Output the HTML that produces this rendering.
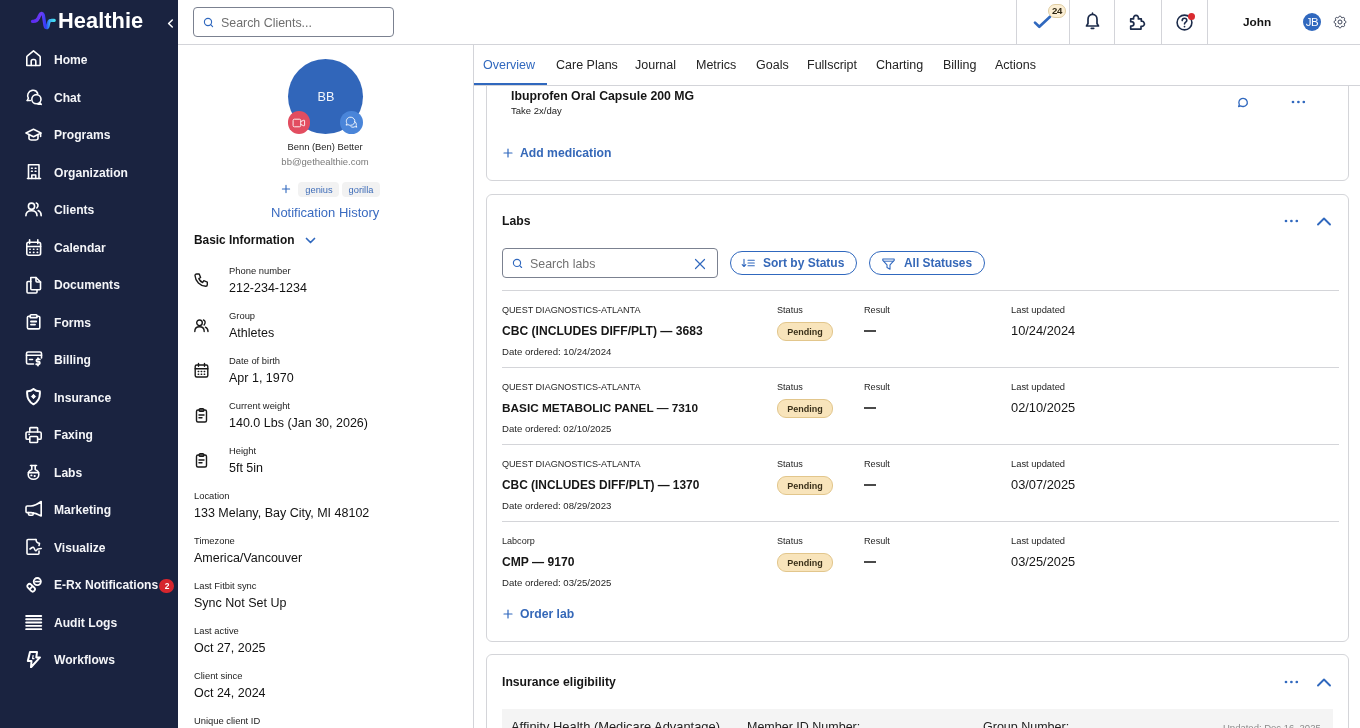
<!DOCTYPE html>
<html><head><meta charset="utf-8"><title>Healthie</title>
<style>
html,body{margin:0;padding:0;}
body{width:1360px;height:728px;overflow:hidden;position:relative;background:#fff;font-family:"Liberation Sans",sans-serif;}
.t{position:absolute;white-space:nowrap;line-height:1;will-change:transform;}
svg{display:block;}
</style></head><body><div style="position:relative;width:1360px;height:728px;overflow:hidden;">
<div style="position:absolute;left:486px;top:20px;width:863px;height:161px;box-sizing:border-box;border:1px solid #d4d5d9;border-radius:6px;background:#fff;"></div>
<div style="position:absolute;left:486px;top:193.5px;width:863px;height:448px;box-sizing:border-box;border:1px solid #d4d5d9;border-radius:6px;background:#fff;"></div>
<div style="position:absolute;left:486px;top:654px;width:863px;height:200px;box-sizing:border-box;border:1px solid #d4d5d9;border-radius:6px;background:#fff;"></div>
<div style="position:absolute;left:474px;top:45px;width:886px;height:40px;background:#fff;"></div>
<div style="position:absolute;left:474px;top:85px;width:886px;height:1px;background:#d3d4d9;"></div>
<div style="position:absolute;left:474px;top:83px;width:73px;height:2.2px;background:#3068be;"></div>
<div class="t" style="left:483.3px;top:59px;font-size:12.5px;color:#3068be;">Overview</div>
<div class="t" style="left:556.3px;top:59px;font-size:12.5px;color:#232323;">Care Plans</div>
<div class="t" style="left:635.2px;top:59px;font-size:12.5px;color:#232323;">Journal</div>
<div class="t" style="left:695.8px;top:59px;font-size:12.5px;color:#232323;">Metrics</div>
<div class="t" style="left:756px;top:59px;font-size:12.5px;color:#232323;">Goals</div>
<div class="t" style="left:806.6px;top:59px;font-size:12.5px;color:#232323;">Fullscript</div>
<div class="t" style="left:876.4px;top:59px;font-size:12.5px;color:#232323;">Charting</div>
<div class="t" style="left:943px;top:59px;font-size:12.5px;color:#232323;">Billing</div>
<div class="t" style="left:995px;top:59px;font-size:12.5px;color:#232323;">Actions</div>
<div class="t" style="left:510.9px;top:90px;font-size:12.3px;font-weight:700;color:#161616;">Ibuprofen Oral Capsule 200 MG</div>
<div class="t" style="left:510.9px;top:106px;font-size:9.5px;color:#222;">Take 2x/day</div>
<svg style="position:absolute;left:1236px;top:96px;" width="14" height="12" viewBox="0 0 14 12" fill="none"><path d="M2.6 10.6 L3.3 8.4 C2.2 6.3 3.2 3.6 5.6 2.7 C8 1.9 10.6 3.2 11.2 5.6 C11.8 8 10 10.3 7.5 10.5 C6.3 10.6 5.3 10.3 4.6 9.9 Z" stroke="#3068be" stroke-width="1.3" stroke-linejoin="round"/></svg>
<svg style="position:absolute;left:1289.5px;top:99.1px;" width="17" height="6" viewBox="0 0 17 6" fill="none"><circle cx="3.00" cy="3" r="1.35" fill="#3068be"/><circle cx="8.40" cy="3" r="1.35" fill="#3068be"/><circle cx="13.80" cy="3" r="1.35" fill="#3068be"/></svg>
<svg style="position:absolute;left:502px;top:147px;" width="12" height="12" viewBox="0 0 12 12" fill="none"><path d="M6 2 V10 M2 6 H10" stroke="#3068be" stroke-width="1.2" stroke-linecap="round"/></svg>
<div class="t" style="left:520.2px;top:147px;font-size:12.2px;font-weight:700;color:#3568b8;">Add medication</div>
<div class="t" style="left:502px;top:215px;font-size:12.2px;font-weight:700;color:#161616;">Labs</div>
<svg style="position:absolute;left:1282.6px;top:218px;" width="17" height="6" viewBox="0 0 17 6" fill="none"><circle cx="3.00" cy="3" r="1.35" fill="#3068be"/><circle cx="8.40" cy="3" r="1.35" fill="#3068be"/><circle cx="13.80" cy="3" r="1.35" fill="#3068be"/></svg>
<svg style="position:absolute;left:1316px;top:214.8px;" width="16" height="12" viewBox="0 0 16 12" fill="none"><path d="M2 9.5 L8 3.5 L14 9.5" stroke="#3068be" stroke-width="1.9" stroke-linecap="round" stroke-linejoin="round"/></svg>
<div style="position:absolute;left:502px;top:248px;width:216px;height:30px;box-sizing:border-box;border:1px solid #7b8190;border-radius:4px;"></div>
<svg style="position:absolute;left:512px;top:258px;" width="11" height="11" viewBox="0 0 11 11" fill="none"><circle cx="5" cy="4.9" r="3.6" stroke="#3068be" stroke-width="1.15"/><path d="M7.7 7.6 L9.6 9.5" stroke="#3068be" stroke-width="1.15" stroke-linecap="round"/></svg>
<div class="t" style="left:530.2px;top:258px;font-size:12.4px;color:#727272;">Search labs</div>
<svg style="position:absolute;left:694px;top:258px;" width="12" height="12" viewBox="0 0 12 12" fill="none"><path d="M1.5 1.5 L10.5 10.5 M10.5 1.5 L1.5 10.5" stroke="#3068be" stroke-width="1.2" stroke-linecap="round"/></svg>
<div style="position:absolute;left:730px;top:251.3px;width:127px;height:24.2px;box-sizing:border-box;border:1.2px solid #3068be;border-radius:13px;"></div>
<svg style="position:absolute;left:741px;top:257px;" width="15" height="12" viewBox="0 0 15 12" fill="none"><path d="M3 2.2 V9.5 M1.2 7.6 L3 9.5 L4.8 7.6" stroke="#3068be" stroke-width="1.1" stroke-linecap="round" stroke-linejoin="round"/><path d="M7 3.2 H13.3 M7 6 H13.3 M7 8.8 H13.3" stroke="#3068be" stroke-width="1.1" stroke-linecap="round"/></svg>
<div class="t" style="left:763.2px;top:257px;font-size:12px;font-weight:700;color:#3568b8;">Sort by Status</div>
<div style="position:absolute;left:869px;top:251.3px;width:116px;height:24.2px;box-sizing:border-box;border:1.2px solid #3068be;border-radius:13px;"></div>
<svg style="position:absolute;left:881px;top:256.5px;" width="15" height="14" viewBox="0 0 15 14" fill="none"><path d="M1.8 2 H13.2 L13.2 3.4 L9 7.8 V12.2 L6 10.6 V7.8 L1.8 3.4 Z" stroke="#3068be" stroke-width="1.1" stroke-linejoin="round"/><path d="M2.6 4.2 H12.4" stroke="#3068be" stroke-width="1"/></svg>
<div class="t" style="left:904.3px;top:258px;font-size:11.9px;font-weight:700;color:#3568b8;">All Statuses</div>
<div style="position:absolute;left:502px;top:290px;width:837px;height:1px;background:#d4d5d9;"></div>
<div class="t" style="left:502px;top:306px;font-size:9.07px;color:#1f1f1f;">QUEST DIAGNOSTICS-ATLANTA</div>
<div class="t" style="left:502px;top:325px;font-size:12.1px;font-weight:700;color:#161616;">CBC (INCLUDES DIFF/PLT) — 3683</div>
<div class="t" style="left:502px;top:347px;font-size:9.6px;color:#1f1f1f;">Date ordered: 10/24/2024</div>
<div class="t" style="left:777.2px;top:306px;font-size:9.14px;color:#1f1f1f;">Status</div>
<div style="position:absolute;left:777.2px;top:322px;width:55.6px;height:19px;box-sizing:border-box;background:#f8e4bb;border:1px solid #e2c68c;border-radius:9px;"></div>
<div class="t" style="left:805px;top:328px;font-size:9.0px;font-weight:700;color:#3a3019;transform:translateX(-50%);">Pending</div>
<div class="t" style="left:863.8px;top:306px;font-size:9.14px;color:#1f1f1f;">Result</div>
<div style="position:absolute;left:864px;top:330.2px;width:11.6px;height:1.8px;background:#4a4a4a;"></div>
<div class="t" style="left:1010.9px;top:306px;font-size:9.36px;color:#1f1f1f;">Last updated</div>
<div class="t" style="left:1010.7px;top:325px;font-size:12.83px;color:#161616;">10/24/2024</div>
<div style="position:absolute;left:502px;top:367px;width:837px;height:1px;background:#d4d5d9;"></div>
<div class="t" style="left:502px;top:383px;font-size:9.07px;color:#1f1f1f;">QUEST DIAGNOSTICS-ATLANTA</div>
<div class="t" style="left:502px;top:403px;font-size:11.8px;font-weight:700;color:#161616;">BASIC METABOLIC PANEL — 7310</div>
<div class="t" style="left:502px;top:424px;font-size:9.6px;color:#1f1f1f;">Date ordered: 02/10/2025</div>
<div class="t" style="left:777.2px;top:383px;font-size:9.14px;color:#1f1f1f;">Status</div>
<div style="position:absolute;left:777.2px;top:399px;width:55.6px;height:19px;box-sizing:border-box;background:#f8e4bb;border:1px solid #e2c68c;border-radius:9px;"></div>
<div class="t" style="left:805px;top:405px;font-size:9.0px;font-weight:700;color:#3a3019;transform:translateX(-50%);">Pending</div>
<div class="t" style="left:863.8px;top:383px;font-size:9.14px;color:#1f1f1f;">Result</div>
<div style="position:absolute;left:864px;top:407.2px;width:11.6px;height:1.8px;background:#4a4a4a;"></div>
<div class="t" style="left:1010.9px;top:383px;font-size:9.36px;color:#1f1f1f;">Last updated</div>
<div class="t" style="left:1010.7px;top:402px;font-size:12.83px;color:#161616;">02/10/2025</div>
<div style="position:absolute;left:502px;top:444px;width:837px;height:1px;background:#d4d5d9;"></div>
<div class="t" style="left:502px;top:460px;font-size:9.07px;color:#1f1f1f;">QUEST DIAGNOSTICS-ATLANTA</div>
<div class="t" style="left:502px;top:480px;font-size:11.9px;font-weight:700;color:#161616;">CBC (INCLUDES DIFF/PLT) — 1370</div>
<div class="t" style="left:502px;top:501px;font-size:9.6px;color:#1f1f1f;">Date ordered: 08/29/2023</div>
<div class="t" style="left:777.2px;top:460px;font-size:9.14px;color:#1f1f1f;">Status</div>
<div style="position:absolute;left:777.2px;top:476px;width:55.6px;height:19px;box-sizing:border-box;background:#f8e4bb;border:1px solid #e2c68c;border-radius:9px;"></div>
<div class="t" style="left:805px;top:482px;font-size:9.0px;font-weight:700;color:#3a3019;transform:translateX(-50%);">Pending</div>
<div class="t" style="left:863.8px;top:460px;font-size:9.14px;color:#1f1f1f;">Result</div>
<div style="position:absolute;left:864px;top:484.2px;width:11.6px;height:1.8px;background:#4a4a4a;"></div>
<div class="t" style="left:1010.9px;top:460px;font-size:9.36px;color:#1f1f1f;">Last updated</div>
<div class="t" style="left:1010.7px;top:479px;font-size:12.83px;color:#161616;">03/07/2025</div>
<div style="position:absolute;left:502px;top:521px;width:837px;height:1px;background:#d4d5d9;"></div>
<div class="t" style="left:502px;top:537px;font-size:9.07px;color:#1f1f1f;">Labcorp</div>
<div class="t" style="left:502px;top:556px;font-size:12.1px;font-weight:700;color:#161616;">CMP — 9170</div>
<div class="t" style="left:502px;top:578px;font-size:9.6px;color:#1f1f1f;">Date ordered: 03/25/2025</div>
<div class="t" style="left:777.2px;top:537px;font-size:9.14px;color:#1f1f1f;">Status</div>
<div style="position:absolute;left:777.2px;top:553px;width:55.6px;height:19px;box-sizing:border-box;background:#f8e4bb;border:1px solid #e2c68c;border-radius:9px;"></div>
<div class="t" style="left:805px;top:559px;font-size:9.0px;font-weight:700;color:#3a3019;transform:translateX(-50%);">Pending</div>
<div class="t" style="left:863.8px;top:537px;font-size:9.14px;color:#1f1f1f;">Result</div>
<div style="position:absolute;left:864px;top:561.2px;width:11.6px;height:1.8px;background:#4a4a4a;"></div>
<div class="t" style="left:1010.9px;top:537px;font-size:9.36px;color:#1f1f1f;">Last updated</div>
<div class="t" style="left:1010.7px;top:556px;font-size:12.83px;color:#161616;">03/25/2025</div>
<svg style="position:absolute;left:502px;top:608px;" width="12" height="12" viewBox="0 0 12 12" fill="none"><path d="M6 2 V10 M2 6 H10" stroke="#3068be" stroke-width="1.2" stroke-linecap="round"/></svg>
<div class="t" style="left:519.9px;top:608px;font-size:12.2px;font-weight:700;color:#3568b8;">Order lab</div>
<div class="t" style="left:502px;top:676px;font-size:12.2px;font-weight:700;color:#161616;">Insurance eligibility</div>
<svg style="position:absolute;left:1282.6px;top:679px;" width="17" height="6" viewBox="0 0 17 6" fill="none"><circle cx="3.00" cy="3" r="1.35" fill="#3068be"/><circle cx="8.40" cy="3" r="1.35" fill="#3068be"/><circle cx="13.80" cy="3" r="1.35" fill="#3068be"/></svg>
<svg style="position:absolute;left:1316px;top:675.8px;" width="16" height="12" viewBox="0 0 16 12" fill="none"><path d="M2 9.5 L8 3.5 L14 9.5" stroke="#3068be" stroke-width="1.9" stroke-linecap="round" stroke-linejoin="round"/></svg>
<div style="position:absolute;left:502px;top:709px;width:831px;height:40px;background:#f4f4f4;"></div>
<div class="t" style="left:511.4px;top:721px;font-size:12.9px;color:#222;">Affinity Health (Medicare Advantage)</div>
<div class="t" style="left:747px;top:721px;font-size:12.5px;color:#222;">Member ID Number:</div>
<div class="t" style="left:983px;top:721px;font-size:12.5px;color:#222;">Group Number:</div>
<div class="t" style="left:1223px;top:723px;font-size:9.5px;color:#8a8a8a;">Updated: Dec 16, 2025</div>
<div style="position:absolute;left:473px;top:45px;width:1px;height:683px;background:#d3d4d9;"></div>
<div style="position:absolute;left:288px;top:58.8px;width:75px;height:75px;background:#3166ba;border-radius:50%;"></div>
<div class="t" style="left:325.5px;top:91px;font-size:12.6px;color:#f2f5fb;transform:translateX(-50%);">BB</div>
<div style="position:absolute;left:287.6px;top:110.9px;width:22.6px;height:22.8px;background:#e24d60;border-radius:50%;"></div>
<svg style="position:absolute;left:290px;top:113px;" width="18" height="18" viewBox="0 0 18 18" fill="none"><rect x="3.1" y="6.2" width="7.6" height="7.6" rx="1.3" stroke="#fff" stroke-width="0.9"/><path d="M10.7 8.6 L13.8 7.2 C14.2 7 14.6 7.3 14.6 7.7 V12.3 C14.6 12.7 14.2 13 13.8 12.8 L10.7 11.4" stroke="#fff" stroke-width="0.9" stroke-linejoin="round"/></svg>
<div style="position:absolute;left:340.1px;top:110.9px;width:22.7px;height:22.8px;background:#4a85d9;border-radius:50%;"></div>
<svg style="position:absolute;left:342px;top:113px;" width="18" height="18" viewBox="0 0 18 18" fill="none"><path d="M4 12.1 L4.9 10.4 C3.6 8.2 4.6 5 7.4 4.3 C9.8 3.7 12.4 5.2 12.8 7.6 C13.2 10.1 11.2 12.3 8.6 12.3 C7.7 12.3 6.8 12.1 6.1 11.7 Z" stroke="#fff" stroke-width="0.9" stroke-linejoin="round"/><path d="M12.6 8.4 C14 9.2 14.7 10.9 14.2 12.5 L14.8 14.2 L13 13.6 C11.9 14.4 10.2 14.5 8.9 13.7" stroke="#fff" stroke-width="0.9" stroke-linejoin="round" stroke-linecap="round"/></svg>
<div class="t" style="left:325.2px;top:142px;font-size:9.4px;color:#1d1d1d;transform:translateX(-50%);">Benn (Ben) Better</div>
<div class="t" style="left:325.2px;top:157px;font-size:9.5px;color:#7a7a7a;transform:translateX(-50%);">bb@gethealthie.com</div>
<svg style="position:absolute;left:281px;top:184px;" width="10" height="10" viewBox="0 0 10 10" fill="none"><path d="M5 1.4 V8.6 M1.4 5 H8.6" stroke="#3068be" stroke-width="1.1" stroke-linecap="round"/></svg>
<div style="position:absolute;left:298px;top:182px;width:41px;height:15px;background:#f2f2f2;border-radius:4px;"></div>
<div class="t" style="left:318.5px;top:186px;font-size:9.3px;color:#3d6cb8;transform:translateX(-50%);">genius</div>
<div style="position:absolute;left:342px;top:182px;width:38.2px;height:15px;background:#f2f2f2;border-radius:4px;"></div>
<div class="t" style="left:361.1px;top:186px;font-size:9.3px;color:#3d6cb8;transform:translateX(-50%);">gorilla</div>
<div class="t" style="left:271.4px;top:206px;font-size:13px;color:#3a6bc0;">Notification History</div>
<div class="t" style="left:193.75px;top:235px;font-size:11.9px;font-weight:700;color:#141414;">Basic Information</div>
<svg style="position:absolute;left:305px;top:236px;" width="11" height="9" viewBox="0 0 11 9" fill="none"><path d="M1.5 2.5 L5.5 6.5 L9.5 2.5" stroke="#3068be" stroke-width="1.7" stroke-linecap="round" stroke-linejoin="round"/></svg>
<div class="t" style="left:229.4px;top:266px;font-size:9.4px;color:#1c1c1c;">Phone number</div>
<div class="t" style="left:229.4px;top:282px;font-size:12.5px;color:#121212;">212-234-1234</div>
<svg style="position:absolute;left:193px;top:272px;" width="17" height="17" viewBox="0 0 17 17" fill="none"><path d="M3.5 2 H6.2 L7.6 5.5 L5.8 6.6 C6.6 8.4 7.9 9.7 9.7 10.5 L10.8 8.7 L14.3 10.1 V12.8 C14.3 13.6 13.6 14.3 12.8 14.3 C7 13.9 2.4 9.3 2 3.5 C2 2.7 2.7 2 3.5 2 Z" stroke="#1a1a1a" stroke-width="1.4" stroke-linecap="round" stroke-linejoin="round"/></svg>
<div class="t" style="left:229.4px;top:311px;font-size:9.4px;color:#1c1c1c;">Group</div>
<div class="t" style="left:229.4px;top:327px;font-size:12.5px;color:#121212;">Athletes</div>
<svg style="position:absolute;left:193px;top:317px;" width="17" height="17" viewBox="0 0 17 17" fill="none"><circle cx="6.5" cy="5.8" r="2.8" stroke="#1a1a1a" stroke-width="1.4" stroke-linecap="round" stroke-linejoin="round"/><path d="M1.8 14.5 C1.8 11.3 3.8 9.8 6.5 9.8 C9.2 9.8 11.2 11.3 11.2 14.5" stroke="#1a1a1a" stroke-width="1.4" stroke-linecap="round" stroke-linejoin="round"/><path d="M10.5 3 C12.3 3.6 12.8 6 11.1 8" stroke="#1a1a1a" stroke-width="1.4" stroke-linecap="round" stroke-linejoin="round"/><path d="M12.4 10.2 C14.2 11 15 12.3 15 14.5" stroke="#1a1a1a" stroke-width="1.4" stroke-linecap="round" stroke-linejoin="round"/></svg>
<div class="t" style="left:229.4px;top:356px;font-size:9.4px;color:#1c1c1c;">Date of birth</div>
<div class="t" style="left:229.4px;top:372px;font-size:12.5px;color:#121212;">Apr 1, 1970</div>
<svg style="position:absolute;left:193px;top:362px;" width="17" height="17" viewBox="0 0 17 17" fill="none"><rect x="2.2" y="3" width="12.6" height="12" rx="1.5" stroke="#1a1a1a" stroke-width="1.4" stroke-linecap="round" stroke-linejoin="round"/><path d="M2.2 6.8 H14.8 M5.5 1.5 V4.2 M11.5 1.5 V4.2" stroke="#1a1a1a" stroke-width="1.4" stroke-linecap="round" stroke-linejoin="round"/><path d="M5.2 9.5h.5M8.2 9.5h.5M11.2 9.5h.5M5.2 12.2h.5M8.2 12.2h.5M11.2 12.2h.5" stroke="#1a1a1a" stroke-width="1.4" stroke-linecap="round" stroke-linejoin="round"/></svg>
<div class="t" style="left:229.4px;top:401px;font-size:9.4px;color:#1c1c1c;">Current weight</div>
<div class="t" style="left:229.4px;top:417px;font-size:12.5px;color:#121212;">140.0 Lbs (Jan 30, 2026)</div>
<svg style="position:absolute;left:193px;top:407px;" width="17" height="17" viewBox="0 0 17 17" fill="none"><rect x="3.5" y="3" width="10" height="12" rx="1.5" stroke="#1a1a1a" stroke-width="1.4" stroke-linecap="round" stroke-linejoin="round"/><rect x="6.2" y="1.6" width="4.6" height="2.8" rx="1" stroke="#1a1a1a" stroke-width="1.4" stroke-linecap="round" stroke-linejoin="round"/><path d="M6 8 H11 M6 10.8 H9" stroke="#1a1a1a" stroke-width="1.4" stroke-linecap="round" stroke-linejoin="round"/></svg>
<div class="t" style="left:229.4px;top:446px;font-size:9.4px;color:#1c1c1c;">Height</div>
<div class="t" style="left:229.4px;top:462px;font-size:12.5px;color:#121212;">5ft 5in</div>
<svg style="position:absolute;left:193px;top:452px;" width="17" height="17" viewBox="0 0 17 17" fill="none"><rect x="3.5" y="3" width="10" height="12" rx="1.5" stroke="#1a1a1a" stroke-width="1.4" stroke-linecap="round" stroke-linejoin="round"/><rect x="6.2" y="1.6" width="4.6" height="2.8" rx="1" stroke="#1a1a1a" stroke-width="1.4" stroke-linecap="round" stroke-linejoin="round"/><path d="M6 8 H11 M6 10.8 H9" stroke="#1a1a1a" stroke-width="1.4" stroke-linecap="round" stroke-linejoin="round"/></svg>
<div class="t" style="left:193.5px;top:491px;font-size:9.4px;color:#1c1c1c;">Location</div>
<div class="t" style="left:193.5px;top:507px;font-size:12.5px;color:#121212;">133 Melany, Bay City, MI 48102</div>
<div class="t" style="left:193.5px;top:536px;font-size:9.4px;color:#1c1c1c;">Timezone</div>
<div class="t" style="left:193.5px;top:552px;font-size:12.5px;color:#121212;">America/Vancouver</div>
<div class="t" style="left:193.5px;top:581px;font-size:9.4px;color:#1c1c1c;">Last Fitbit sync</div>
<div class="t" style="left:193.5px;top:597px;font-size:12.5px;color:#121212;">Sync Not Set Up</div>
<div class="t" style="left:193.5px;top:626px;font-size:9.4px;color:#1c1c1c;">Last active</div>
<div class="t" style="left:193.5px;top:642px;font-size:12.5px;color:#121212;">Oct 27, 2025</div>
<div class="t" style="left:193.5px;top:671px;font-size:9.4px;color:#1c1c1c;">Client since</div>
<div class="t" style="left:193.5px;top:687px;font-size:12.5px;color:#121212;">Oct 24, 2024</div>
<div class="t" style="left:193.5px;top:716px;font-size:9.4px;color:#1c1c1c;">Unique client ID</div>
<div style="position:absolute;left:178px;top:0px;width:1182px;height:44px;background:#fff;"></div>
<div style="position:absolute;left:178px;top:44px;width:1182px;height:1px;background:#d3d4d9;"></div>
<div style="position:absolute;left:193px;top:7px;width:201px;height:30px;box-sizing:border-box;border:1px solid #7b8190;border-radius:4px;background:#fff;"></div>
<svg style="position:absolute;left:203px;top:17px;" width="11" height="11" viewBox="0 0 11 11" fill="none"><circle cx="5" cy="5" r="3.6" stroke="#3068be" stroke-width="1.15"/><path d="M7.7 7.7 L9.6 9.6" stroke="#3068be" stroke-width="1.15" stroke-linecap="round"/></svg>
<div class="t" style="left:221.4px;top:17px;font-size:12.4px;color:#6f6f6f;">Search Clients...</div>
<div style="position:absolute;left:1016px;top:0px;width:1px;height:44px;background:#d3d4d9;"></div>
<div style="position:absolute;left:1069px;top:0px;width:1px;height:44px;background:#d3d4d9;"></div>
<div style="position:absolute;left:1114px;top:0px;width:1px;height:44px;background:#d3d4d9;"></div>
<div style="position:absolute;left:1161px;top:0px;width:1px;height:44px;background:#d3d4d9;"></div>
<div style="position:absolute;left:1207px;top:0px;width:1px;height:44px;background:#d3d4d9;"></div>
<svg style="position:absolute;left:1033px;top:14px;" width="20" height="16" viewBox="0 0 20 16" fill="none"><path d="M2 8.6 L6.3 12.8 L17 2.8" stroke="#3068be" stroke-width="2.7" stroke-linecap="round" stroke-linejoin="round"/></svg>
<div style="position:absolute;left:1048px;top:4px;width:18px;height:14px;box-sizing:border-box;background:#fcefd4;border:1px solid #dfcda3;border-radius:7px;"></div>
<div class="t" style="left:1057px;top:6px;font-size:9.6px;font-weight:700;color:#2e2612;letter-spacing:-0.3px;transform:translateX(-50%);">24</div>
<svg style="position:absolute;left:1084px;top:12px;" width="17" height="18" viewBox="0 0 17 18" fill="none"><path d="M8.5 2.3 C11.2 2.3 13 4.5 13 7.3 V11.5 L14.5 14 H2.5 L4 11.5 V7.3 C4 4.5 5.8 2.3 8.5 2.3 Z" stroke="#1c2b4a" stroke-width="1.7" stroke-linejoin="round"/><path d="M7.3 16.3 H9.7" stroke="#1c2b4a" stroke-width="1.7" stroke-linecap="round"/><path d="M8.5 1 V2.3" stroke="#1c2b4a" stroke-width="1.5" stroke-linecap="round"/></svg>
<svg style="position:absolute;left:1128px;top:13px;" width="19" height="19" viewBox="0 0 19 19" fill="none"><path d="M2.7 16.1 H13 V13.4 C15.4 13.6 16.8 11.8 16.3 10.2 C15.8 8.6 14.6 8 13.3 8.2 V5.9 H10.4 C10.8 3.5 9.4 2.3 8 2.3 C6.6 2.3 5.2 3.5 5.6 5.9 H2.7 V8.7 C4.6 8.7 5.9 9.7 5.9 11 C5.9 12.3 4.6 13.2 2.7 13.2 Z" stroke="#1c2b4a" stroke-width="1.7" stroke-linejoin="round"/></svg>
<svg style="position:absolute;left:1175px;top:13px;" width="19" height="19" viewBox="0 0 19 19" fill="none"><circle cx="9.5" cy="9.5" r="7.4" stroke="#1c2b4a" stroke-width="1.6"/><path d="M7.2 7.6 C7.2 6.2 8.3 5.3 9.5 5.3 C10.8 5.3 11.8 6.2 11.8 7.4 C11.8 9.1 9.5 9.2 9.5 11" stroke="#1c2b4a" stroke-width="1.6" stroke-linecap="round"/><circle cx="9.5" cy="13.6" r="0.9" fill="#1c2b4a"/></svg>
<div style="position:absolute;left:1187.6px;top:12.5px;width:7.4px;height:7.4px;background:#d92a2f;border-radius:50%;"></div>
<div class="t" style="left:1242.6px;top:17px;font-size:11.8px;font-weight:700;color:#151515;">John</div>
<div style="position:absolute;left:1303px;top:13px;width:18.2px;height:18.2px;background:#3068be;border-radius:50%;"></div>
<div class="t" style="left:1312.1px;top:17px;font-size:11.5px;color:#fff;letter-spacing:-0.5px;transform:translateX(-50%);">JB</div>
<svg style="position:absolute;left:1331.6px;top:13.8px;" width="16" height="16" viewBox="0 0 24 24" fill="none"><path d="M10.325 4.317c.426 -1.756 2.924 -1.756 3.35 0a1.724 1.724 0 0 0 2.573 1.066c1.543 -.94 3.31 .826 2.37 2.37a1.724 1.724 0 0 0 1.065 2.572c1.756 .426 1.756 2.924 0 3.35a1.724 1.724 0 0 0 -1.066 2.573c.94 1.543 -.826 3.31 -2.37 2.37a1.724 1.724 0 0 0 -2.572 1.065c-.426 1.756 -2.924 1.756 -3.35 0a1.724 1.724 0 0 0 -2.573 -1.066c-1.543 .94 -3.31 -.826 -2.37 -2.37a1.724 1.724 0 0 0 -1.065 -2.572c-1.756 -.426 -1.756 -2.924 0 -3.35a1.724 1.724 0 0 0 1.066 -2.573c-.94 -1.543 .826 -3.31 2.37 -2.37c1 .608 2.296 .07 2.572 -1.065z" stroke="#3b4256" stroke-width="1.5" stroke-linejoin="round"/><circle cx="12" cy="12" r="3" stroke="#3b4256" stroke-width="1.5"/></svg>
<div style="position:absolute;left:0px;top:0px;width:178px;height:728px;background:#1a2340;"></div>
<svg style="position:absolute;left:28px;top:8px;" width="34" height="24" viewBox="0 0 34 24" fill="none"><defs><linearGradient id="lg" gradientUnits="userSpaceOnUse" x1="4" y1="0" x2="26.5" y2="0">
<stop offset="0" stop-color="#5a2af0"/><stop offset="0.42" stop-color="#6c3cf6"/><stop offset="0.62" stop-color="#2b3ff6"/><stop offset="0.78" stop-color="#3aa8f2"/><stop offset="1" stop-color="#44e2f2"/></linearGradient></defs>
<path d="M4.5 13.3 C7 13.5 9 13.5 10.3 10.2 L11.8 7 C12.8 4.6 14.8 4.8 15.4 7.4 L17 17.4 C17.6 20.4 19.5 20.4 20.1 17.6 L20.7 14.6 C21 13 21.6 12.4 23.2 12.4 L26.2 12.3" stroke="url(#lg)" stroke-width="3.3" stroke-linecap="round" stroke-linejoin="round"/></svg>
<div class="t" style="left:58.4px;top:10px;font-size:21.8px;font-weight:700;color:#ffffff;letter-spacing:0.05px;">Healthie</div>
<svg style="position:absolute;left:164px;top:17px;" width="12" height="12" viewBox="0 0 12 12" fill="none"><path d="M8.3 3 L4.6 6.5 L8.3 10" stroke="#ffffff" stroke-width="1.5" stroke-linecap="round" stroke-linejoin="round"/></svg>
<div class="t" style="left:54.4px;top:54px;font-size:12.1px;font-weight:700;color:#f4f5f8;">Home</div>
<svg style="position:absolute;left:25px;top:50px;" width="18" height="18" viewBox="0 0 18 18" fill="none"><path d="M1.8 15.5 V7 C1.8 6.5 2 6.1 2.4 5.8 L8.5 0.9 L14.6 5.8 C15 6.1 15.2 6.5 15.2 7 V14.8 C15.2 15.2 14.9 15.5 14.5 15.5 Z" stroke="#fff" stroke-width="1.6" stroke-linecap="round" stroke-linejoin="round"/><path d="M6.2 15.5 V11.3 C6.2 10.3 7 9.5 8 9.5 H9 C10 9.5 10.8 10.3 10.8 11.3 V15.5" stroke="#fff" stroke-width="1.6" stroke-linecap="round" stroke-linejoin="round"/></svg>
<div class="t" style="left:54.4px;top:92px;font-size:12.1px;font-weight:700;color:#f4f5f8;">Chat</div>
<svg style="position:absolute;left:25px;top:88px;" width="18" height="18" viewBox="0 0 18 18" fill="none"><path d="M2.3 12.5 L3.4 10.2 C1.6 7.4 3.2 3 7.1 2.4 C9.5 2 11.8 3.3 12.7 5.3" stroke="#fff" stroke-width="1.6" stroke-linecap="round" stroke-linejoin="round"/><path d="M2.3 12.5 H5.4" stroke="#fff" stroke-width="1.6" stroke-linecap="round" stroke-linejoin="round"/><circle cx="11.4" cy="11.2" r="4.6" stroke="#fff" stroke-width="1.6" stroke-linecap="round" stroke-linejoin="round"/><path d="M16.2 16.3 L14.6 14.6 M16.2 16.3 H13" stroke="#fff" stroke-width="1.6" stroke-linecap="round" stroke-linejoin="round"/></svg>
<div class="t" style="left:54.4px;top:129px;font-size:12.1px;font-weight:700;color:#f4f5f8;">Programs</div>
<svg style="position:absolute;left:25px;top:126px;" width="18" height="18" viewBox="0 0 18 18" fill="none"><path d="M16 7 L8.5 3.3 L1 7 L8.5 10.7 Z" stroke="#fff" stroke-width="1.6" stroke-linecap="round" stroke-linejoin="round"/><path d="M4 8.8 V12.4 C4 14.6 13 14.6 13 12.4 V8.8" stroke="#fff" stroke-width="1.6" stroke-linecap="round" stroke-linejoin="round"/><path d="M15.6 7.2 V10.4" stroke="#fff" stroke-width="1.6" stroke-linecap="round" stroke-linejoin="round"/></svg>
<div class="t" style="left:54.4px;top:167px;font-size:12.1px;font-weight:700;color:#f4f5f8;">Organization</div>
<svg style="position:absolute;left:25px;top:163px;" width="18" height="18" viewBox="0 0 18 18" fill="none"><path d="M2.5 15.5 H15.5" stroke="#fff" stroke-width="1.6" stroke-linecap="round" stroke-linejoin="round"/><path d="M3.5 15.5 V1.8 H14 V15.5" stroke="#fff" stroke-width="1.6" stroke-linecap="round" stroke-linejoin="round"/><path d="M6.5 5.2h.8M10.2 5.2h.8M6.5 8.3h.8M10.2 8.3h.8" stroke="#fff" stroke-width="1.6" stroke-linecap="round" stroke-linejoin="round"/><path d="M6.8 15.5 V12 H10.7 V15.5" stroke="#fff" stroke-width="1.6" stroke-linecap="round" stroke-linejoin="round"/></svg>
<div class="t" style="left:54.4px;top:204px;font-size:12.1px;font-weight:700;color:#f4f5f8;">Clients</div>
<svg style="position:absolute;left:25px;top:200px;" width="18" height="18" viewBox="0 0 18 18" fill="none"><circle cx="6.5" cy="6.2" r="3.1" stroke="#fff" stroke-width="1.6" stroke-linecap="round" stroke-linejoin="round"/><path d="M0.9 15.8 C0.9 12.4 3.4 10.7 6.5 10.7 C9.6 10.7 12 12.4 12 15.8" stroke="#fff" stroke-width="1.6" stroke-linecap="round" stroke-linejoin="round"/><path d="M11.3 3 C13.1 3.6 13.8 6 11.8 8" stroke="#fff" stroke-width="1.6" stroke-linecap="round" stroke-linejoin="round"/><path d="M13.2 10.6 C15.2 11.4 16.2 13 16.2 15.8" stroke="#fff" stroke-width="1.6" stroke-linecap="round" stroke-linejoin="round"/></svg>
<div class="t" style="left:54.4px;top:242px;font-size:12.1px;font-weight:700;color:#f4f5f8;">Calendar</div>
<svg style="position:absolute;left:25px;top:238px;" width="18" height="18" viewBox="0 0 18 18" fill="none"><g transform="translate(0 1)"><rect x="1.8" y="3.2" width="13.8" height="13" rx="2" stroke="#fff" stroke-width="1.6" stroke-linecap="round" stroke-linejoin="round"/><path d="M1.8 7.5 H15.6 M4.6 0.8 V4.6 M12.8 0.8 V4.6" stroke="#fff" stroke-width="1.6" stroke-linecap="round" stroke-linejoin="round"/><path d="M4.8 10.3h.4M8.5 10.3h.4M12.2 10.3h.4M4.8 13.4h.4M8.5 13.4h.4M12.2 13.4h.4" stroke="#fff" stroke-width="1.6" stroke-linecap="round" stroke-linejoin="round"/></g></svg>
<div class="t" style="left:54.4px;top:279px;font-size:12.1px;font-weight:700;color:#f4f5f8;">Documents</div>
<svg style="position:absolute;left:25px;top:276px;" width="18" height="18" viewBox="0 0 18 18" fill="none"><path d="M5.8 1.5 H11 L15.5 6 V12.8 C15.5 13.4 15 13.8 14.5 13.8 H6.8 C6.2 13.8 5.8 13.4 5.8 12.8 Z" stroke="#fff" stroke-width="1.6" stroke-linecap="round" stroke-linejoin="round"/><path d="M11 1.5 V5 C11 5.6 11.4 6 12 6 H15.5" stroke="#fff" stroke-width="1.6" stroke-linecap="round" stroke-linejoin="round"/><path d="M5.8 5.5 H3 C2.4 5.5 2 5.9 2 6.5 V16 C2 16.6 2.4 17 3 17 H11 C11.6 17 12 16.6 12 16 V13.8" stroke="#fff" stroke-width="1.6" stroke-linecap="round" stroke-linejoin="round"/></svg>
<div class="t" style="left:54.4px;top:317px;font-size:12.1px;font-weight:700;color:#f4f5f8;">Forms</div>
<svg style="position:absolute;left:25px;top:313px;" width="18" height="18" viewBox="0 0 18 18" fill="none"><path d="M5.2 3.2 H3.8 C3 3.2 2.4 3.8 2.4 4.6 V14.5 C2.4 15.3 3 15.9 3.8 15.9 H13.4 C14.2 15.9 14.8 15.3 14.8 14.5 V4.6 C14.8 3.8 14.2 3.2 13.4 3.2 H12" stroke="#fff" stroke-width="1.6" stroke-linecap="round" stroke-linejoin="round"/><path d="M5.2 4.6 V2.6 C5.2 2.1 5.6 1.7 6.1 1.7 H11.1 C11.6 1.7 12 2.1 12 2.6 V4.6 Z" stroke="#fff" stroke-width="1.6" stroke-linecap="round" stroke-linejoin="round"/><path d="M6 8.5 H11.2 M6 11.6 H10" stroke="#fff" stroke-width="1.9" stroke-linecap="round"/></svg>
<div class="t" style="left:54.4px;top:354px;font-size:12.1px;font-weight:700;color:#f4f5f8;">Billing</div>
<svg style="position:absolute;left:25px;top:350px;" width="18" height="18" viewBox="0 0 18 18" fill="none"><path d="M8.5 14 H3 C2.1 14 1.5 13.4 1.5 12.5 V3.5 C1.5 2.6 2.1 2 3 2 H15 C15.9 2 16.5 2.6 16.5 3.5 V8" stroke="#fff" stroke-width="1.6" stroke-linecap="round" stroke-linejoin="round"/><path d="M1.5 5.2 H16.5" stroke="#fff" stroke-width="1.6" stroke-linecap="round" stroke-linejoin="round"/><path d="M4.5 9.5 H7.5" stroke="#fff" stroke-width="1.6" stroke-linecap="round" stroke-linejoin="round"/><path d="M14.8 9.4 H12.6 C11.9 9.4 11.4 9.9 11.4 10.6 C11.4 11.3 11.9 11.8 12.6 11.8 H13.6 C14.3 11.8 14.8 12.3 14.8 13 C14.8 13.7 14.3 14.2 13.6 14.2 H11.3 M13 8.2 V9.4 M13 14.2 V15.6" stroke="#fff" stroke-width="1.9" stroke-linecap="round" stroke-linejoin="round"/></svg>
<div class="t" style="left:54.4px;top:392px;font-size:12.1px;font-weight:700;color:#f4f5f8;">Insurance</div>
<svg style="position:absolute;left:25px;top:388px;" width="18" height="18" viewBox="0 0 18 18" fill="none"><path d="M8.5 1 C10.6 2.8 12.9 3.5 14.8 3.3 C15.4 9.8 12.7 14 8.5 16.3 C4.3 14 1.6 9.8 2.2 3.3 C4.1 3.5 6.4 2.8 8.5 1 Z" stroke="#fff" stroke-width="2" stroke-linejoin="round"/><path d="M8.5 6.3 L10.6 8.5 L8.5 10.7 L6.4 8.5 Z" fill="#fff" stroke="#fff" stroke-width="1" stroke-linejoin="round"/></svg>
<div class="t" style="left:54.4px;top:429px;font-size:12.1px;font-weight:700;color:#f4f5f8;">Faxing</div>
<svg style="position:absolute;left:25px;top:426px;" width="18" height="18" viewBox="0 0 18 18" fill="none"><path d="M12.8 13.3 H14.8 C15.6 13.3 16.2 12.7 16.2 11.9 V7.4 C16.2 6.6 15.6 6 14.8 6 H2.4 C1.6 6 1 6.6 1 7.4 V11.9 C1 12.7 1.6 13.3 2.4 13.3 H4.5" stroke="#fff" stroke-width="1.6" stroke-linecap="round" stroke-linejoin="round"/><path d="M4.8 6 V2.3 C4.8 1.9 5.1 1.6 5.5 1.6 H11.9 C12.3 1.6 12.6 1.9 12.6 2.3 V6" stroke="#fff" stroke-width="1.6" stroke-linecap="round" stroke-linejoin="round"/><rect x="4.8" y="10.5" width="7.8" height="6" rx="0.8" stroke="#fff" stroke-width="1.6" stroke-linecap="round" stroke-linejoin="round"/><path d="M4 8.4h.3" stroke="#fff" stroke-width="1.6" stroke-linecap="round" stroke-linejoin="round"/></svg>
<div class="t" style="left:54.4px;top:467px;font-size:12.1px;font-weight:700;color:#f4f5f8;">Labs</div>
<svg style="position:absolute;left:25px;top:463px;" width="18" height="18" viewBox="0 0 18 18" fill="none"><path d="M5.5 2.5 H11.5" stroke="#fff" stroke-width="1.6" stroke-linecap="round" stroke-linejoin="round"/><path d="M6.8 2.5 V6.4 C4.5 7.2 3.2 9.2 3.2 11.4 C3.2 14.2 5.5 16.2 8.5 16.2 C11.5 16.2 13.8 14.2 13.8 11.4 C13.8 9.2 12.5 7.2 10.2 6.4 V2.5" stroke="#fff" stroke-width="1.6" stroke-linecap="round" stroke-linejoin="round"/><path d="M3.4 9.6 H13.6" stroke="#fff" stroke-width="1.6" stroke-linecap="round" stroke-linejoin="round"/><path d="M6.2 12.4h.4M9.5 13h.4" stroke="#fff" stroke-width="1.8" stroke-linecap="round"/></svg>
<div class="t" style="left:54.4px;top:504px;font-size:12.1px;font-weight:700;color:#f4f5f8;">Marketing</div>
<svg style="position:absolute;left:25px;top:500px;" width="18" height="18" viewBox="0 0 18 18" fill="none"><path d="M16.2 1.5 V16 C12.5 13.8 9.5 12.8 6 12.6 H2.2 C1.5 12.6 1 12.1 1 11.4 V7.2 C1 6.5 1.5 6 2.2 6 H6 C9.5 5.8 12.5 4.2 16.2 1.5 Z" stroke="#fff" stroke-width="1.6" stroke-linecap="round" stroke-linejoin="round"/><path d="M3.5 12.6 V14 C3.5 14.7 4 15.2 4.7 15.2 H7.2 C7.9 15.2 8.2 14.7 8.2 14 V12.8" stroke="#fff" stroke-width="1.6" stroke-linecap="round" stroke-linejoin="round"/></svg>
<div class="t" style="left:54.4px;top:542px;font-size:12.1px;font-weight:700;color:#f4f5f8;">Visualize</div>
<svg style="position:absolute;left:25px;top:538px;" width="18" height="18" viewBox="0 0 18 18" fill="none"><path d="M11 1.5 H3 C2.4 1.5 2 1.9 2 2.5 V15.2 C2 15.8 2.4 16.2 3 16.2 H13 C13.6 16.2 14 15.8 14 15.2 V13" stroke="#fff" stroke-width="1.6" stroke-linecap="round" stroke-linejoin="round"/><path d="M11 1.5 C11 3.8 12.5 5.2 14.5 5.2 C14.5 6.2 14.2 6.8 14 7.5" stroke="#fff" stroke-width="1.6" stroke-linecap="round" stroke-linejoin="round"/><path d="M5 11 L7.2 9.5 C8 9 8.6 9.2 9 10 L10 12 C10.5 13 11.3 13 11.8 12 C12.4 10.8 13.5 10.5 16.2 10.5" stroke="#fff" stroke-width="1.6" stroke-linecap="round" stroke-linejoin="round"/></svg>
<div class="t" style="left:54.4px;top:579px;font-size:12.1px;font-weight:700;color:#f4f5f8;">E-Rx Notifications</div>
<svg style="position:absolute;left:25px;top:576px;" width="18" height="18" viewBox="0 0 18 18" fill="none"><g transform="translate(0 -1.5)"><g transform="rotate(45 6.1 13.2)"><rect x="1.6" y="10.95" width="9" height="4.5" rx="2.25" stroke="#fff" stroke-width="1.8"/><path d="M6.1 10.95 V15.45" stroke="#fff" stroke-width="1.8"/></g><circle cx="12.3" cy="7.1" r="3.6" stroke="#fff" stroke-width="1.8"/><path d="M9.6 7.1 H15" stroke="#fff" stroke-width="1.6"/></g></svg>
<div class="t" style="left:54.4px;top:617px;font-size:12.1px;font-weight:700;color:#f4f5f8;">Audit Logs</div>
<svg style="position:absolute;left:25px;top:613px;" width="18" height="18" viewBox="0 0 18 18" fill="none"><g transform="translate(0 1)"><rect x="0.2" y="1" width="17" height="1.9" rx="0.95" fill="#fff"/><rect x="0.2" y="4.3" width="17" height="1.9" rx="0.95" fill="#fff"/><rect x="0.2" y="7.6" width="17" height="1.9" rx="0.95" fill="#fff"/><rect x="0.2" y="10.9" width="17" height="1.9" rx="0.95" fill="#fff"/><rect x="0.2" y="14.2" width="17" height="1.9" rx="0.95" fill="#fff"/></g></svg>
<div class="t" style="left:54.4px;top:654px;font-size:12.1px;font-weight:700;color:#f4f5f8;">Workflows</div>
<svg style="position:absolute;left:25px;top:650px;" width="18" height="18" viewBox="0 0 18 18" fill="none"><path d="M5 2.1 H12 L11.3 7.4 H15 L6 17.2 L6.5 11 H2.8 Z" stroke="#fff" stroke-width="2" stroke-linejoin="round"/><path d="M8.2 5.2 L7.6 8.6 H9.4" stroke="#fff" stroke-width="1.2" stroke-linejoin="round"/></svg>
<div style="position:absolute;left:159.4px;top:578.5px;width:14.5px;height:14.5px;background:#d6262e;border-radius:50%;"></div>
<div class="t" style="left:166.6px;top:582px;font-size:8.5px;font-weight:700;color:#fff;transform:translateX(-50%);">2</div>
</div></body></html>
